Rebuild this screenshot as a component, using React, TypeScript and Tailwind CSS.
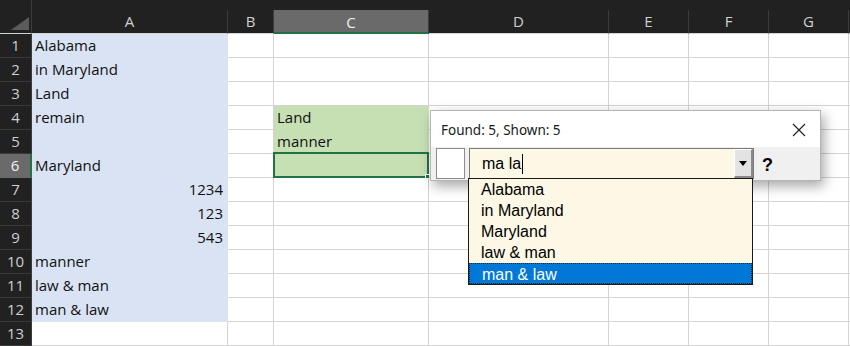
import React from "react";

const cols = [
  { key: "A", w: 196 },
  { key: "B", w: 46 },
  { key: "C", w: 155 },
  { key: "D", w: 180 },
  { key: "E", w: 80 },
  { key: "F", w: 80 },
  { key: "G", w: 80 },
];

type Cell = { text?: string; right?: boolean; fill?: string };

const data: Record<number, Record<string, Cell>> = {
  1: { A: { text: "Alabama" } },
  2: { A: { text: "in Maryland" } },
  3: { A: { text: "Land" } },
  4: { A: { text: "remain" }, C: { text: "Land", fill: "green" } },
  5: { A: {}, C: { text: "manner", fill: "green" } },
  6: { A: { text: "Maryland" }, C: { fill: "green" } },
  7: { A: { text: "1234", right: true } },
  8: { A: { text: "123", right: true } },
  9: { A: { text: "543", right: true } },
  10: { A: { text: "manner" } },
  11: { A: { text: "law & man" } },
  12: { A: { text: "man & law" } },
};

const widthClass: Record<string, string> = {
  A: "w-[196px]",
  B: "w-[46px]",
  C: "w-[155px]",
  D: "w-[180px]",
  E: "w-[80px]",
  F: "w-[80px]",
  G: "w-[80px]",
};

function GridCell({ row, col }: { row: number; col: string }) {
  let cell: Cell = data[row]?.[col] ?? {};
  const isA = col === "A" && row <= 12;
  const isGreen = cell.fill === "green";
  let cls = "border-[#d4d4d4] bg-white";
  if (isA) cls = "border-[#dae3f3] bg-[#dae3f3]";
  if (isGreen) cls = "border-[#c6e0b4] bg-[#c6e0b4]";
  const selected = row === 6 && col === "C";
  return (
    <div
      className={`relative h-[24px] shrink-0 border-r border-b ${cls} ${widthClass[col]} px-[3px] leading-[23px] text-[15px] text-[#111] whitespace-nowrap ${
        cell.right ? "text-right pr-[4px]" : ""
      }`}
    >
      <span>{cell.text ?? ""}</span>
      {selected && (
        <div className="absolute -left-[1px] -top-[2px] right-[-1px] bottom-[-1px] border-2 border-[#217346]">
          <div className="absolute -right-[4px] -bottom-[4px] w-[6px] h-[6px] bg-[#217346] border border-white" />
        </div>
      )}
    </div>
  );
}

function Dialog() {
  return (
    <div className="absolute left-[430px] top-[110px] w-[391px] h-[71px] bg-[#f0f0f0] border border-[#b5b5b5] shadow-[3px_5px_12px_rgba(0,0,0,0.35)] flex flex-col">
      <div className="h-[36px] bg-white flex items-center justify-between pl-[10px] pr-[14px]">
        <span className="text-[13.5px] text-[#1a1a1a] font-['Noto_Sans',sans-serif] relative top-[1px]">
          Found: 5, Shown: 5
        </span>
        <svg width="14" height="14" viewBox="0 0 14 14" className="relative top-[1px]">
          <path d="M1 1 L13 13 M13 1 L1 13" stroke="#222" strokeWidth="1.2" />
        </svg>
      </div>
      <div className="flex items-start pt-[1px] pl-[5px] gap-[4px]">
        <div className="w-[29px] h-[31px] bg-white border border-[#8c8c8c]" />
        <div className="relative w-[285px] h-[31px] bg-[#fdf8e6] border border-[#7a7a7a] flex items-center">
          <span className="pl-[12px] text-[16px] text-black font-['Liberation_Sans',Arial,sans-serif] leading-none">
            ma la
          </span>
          <span className="ml-[1px] w-[1px] h-[20px] bg-black" />
          <div className="absolute right-0 top-0 bottom-0 w-[19px] bg-[#e3e3e3] border-t border-l border-white border-r-2 border-b-2 border-r-[#8a8a8a] border-b-[#8a8a8a] flex items-center justify-center">
            <svg width="8" height="5" viewBox="0 0 8 5">
              <path d="M0 0 L8 0 L4 5 Z" fill="#000" />
            </svg>
          </div>
        </div>
        <span className="ml-[4px] mt-[4px] text-[18px] font-bold text-black font-['Liberation_Sans',Arial,sans-serif]">
          ?
        </span>
      </div>
    </div>
  );
}

function DropList() {
  const items = ["Alabama", "in Maryland", "Maryland", "law & man", "man & law"];
  return (
    <div className="absolute left-[468px] top-[178px] w-[285px] bg-[#fdf8e6] border border-[#1a1a1a] flex flex-col font-['Liberation_Sans',Arial,sans-serif] text-[16px]">
      {items.map((it, i) => {
        const sel = i === items.length - 1;
        return (
          <div
            key={it}
            className={`h-[21px] leading-[21px] pl-[12px] ${
              sel ? "bg-[#0078d7] text-white border border-dotted border-[#222] pl-[11px] leading-[19px]" : "text-black"
            }`}
          >
            {it}
          </div>
        );
      })}
    </div>
  );
}

export default function App() {
  const rows = Array.from({ length: 13 }, (_, i) => i + 1);
  return (
    <div className="relative w-[850px] h-[346px] overflow-hidden bg-white font-['Open_Sans',sans-serif]">
      {/* Column header */}
      <div className="flex h-[34px] bg-[#212121]">
        <div className="w-[32px] shrink-0 h-[34px] border-r border-[#3d3d3d] border-b border-b-[#d4d4d4] relative">
          <svg width="18" height="13" viewBox="0 0 18 13" className="absolute left-[11px] top-[17px]">
            <path d="M18 0 L18 13 L0 13 Z" fill="#5b5b5b" />
          </svg>
        </div>
        {cols.map((c) => {
          const sel = c.key === "C";
          return (
            <div key={c.key} className={`${widthClass[c.key]} shrink-0 h-[34px] flex flex-col`}>
              <div className="h-[10px]" />
              <div
                className={`flex-1 flex items-center justify-center text-[15px] border-r border-[#3d3d3d] ${
                  sel
                    ? "bg-[#6a6a6a] text-[#f0f0f0] border-b-2 border-b-[#217346]"
                    : "text-[#d0d0d0] border-b border-b-[#d4d4d4]"
                }`}
              >
                <span className={sel ? "relative top-[1px]" : ""}>{c.key}</span>
              </div>
            </div>
          );
        })}
        <div className="flex-1 flex flex-col">
          <div className="h-[10px]" />
          <div className="flex-1 border-b border-[#d4d4d4]" />
        </div>
      </div>
      {/* Rows */}
      {rows.map((r) => (
        <div key={r} className="flex h-[24px]">
          <div
            className={`w-[32px] shrink-0 h-[24px] flex items-center justify-center text-[15px] border-b ${
              r === 6
                ? "bg-[#6a6a6a] text-[#f2f2f2] border-b-[#6a6a6a] border-r-2 border-r-[#217346]"
                : "bg-[#212121] text-[#cfcfcf] border-b-[#3a3a3a] border-r border-r-[#3d3d3d]"
            }`}
          >
            <span>{r}</span>
          </div>
          {cols.map((c) => (
            <GridCell key={c.key} row={r} col={c.key} />
          ))}
          <div className="flex-1 h-[24px] border-b border-[#d4d4d4]" />
        </div>
      ))}
      <Dialog />
      <DropList />
    </div>
  );
}
